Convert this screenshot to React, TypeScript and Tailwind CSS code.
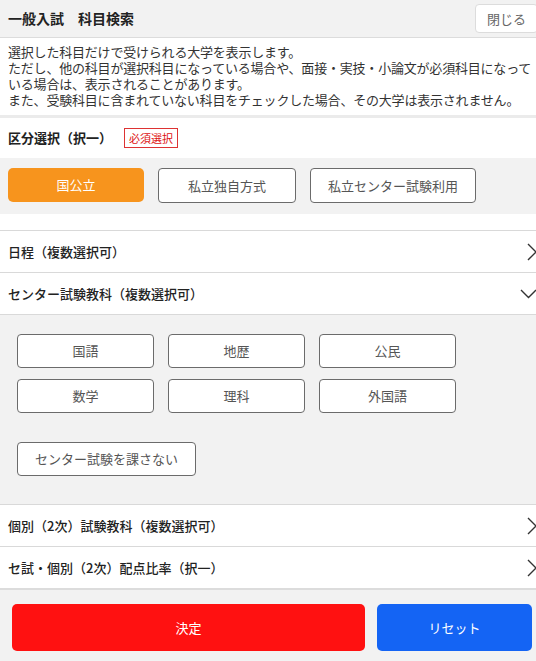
import React from "react";

const font = { fontFamily: '"Noto Sans CJK JP", "Noto Sans", sans-serif' };

function ChevronRight() {
  return (
    <svg width="10" height="18" viewBox="0 0 10 18" className="mr-[-1px] shrink-0">
      <polyline points="1,1 9,9 1,17" fill="none" stroke="#333" strokeWidth="1.4" />
    </svg>
  );
}

function ChevronDown() {
  return (
    <svg width="17" height="10" viewBox="0 0 17 10" className="mr-[-1px] shrink-0">
      <polyline points="1,1 8.5,8.5 16,1" fill="none" stroke="#333" strokeWidth="1.4" />
    </svg>
  );
}

function Row({ label, open }: { label: string; open?: boolean }) {
  return (
    <div className="h-[42px] bg-white border-t border-[#d9d9d9] flex items-center justify-between pl-2">
      <span className="text-[13px] font-medium text-[#222]">{label}</span>
      {open ? <ChevronDown /> : <ChevronRight />}
    </div>
  );
}

function SubjBtn({ label, w = "w-[137px]" }: { label: string; w?: string }) {
  return (
    <button className={`${w} h-[34px] bg-white border border-[#6b6b6b] rounded-[4px] text-[13px] text-[#555] flex items-center justify-center`}>
      {label}
    </button>
  );
}

export default function App() {
  return (
    <div className="w-[536px] h-[661px] overflow-hidden bg-white flex flex-col" style={font}>
      <div className="h-[38px] bg-[#f2f2f2] border-b border-[#dcdcdc] flex items-center justify-between pl-2 shrink-0">
        <span className="text-[14px] font-bold text-[#222]">一般入試　科目検索</span>
        <button className="w-[63px] h-[29px] mr-[-2px] bg-white border border-[#dcdcdc] rounded-[4px] text-[13px] text-[#666] flex items-center justify-center">
          閉じる
        </button>
      </div>
      <div className="bg-white px-2 pt-[6px] pb-[7px] text-[13px] leading-[16px] tracking-[-0.2px] text-[#333] border-b-[3px] border-[#ebebeb] shrink-0 whitespace-nowrap">
        <p>選択した科目だけで受けられる大学を表示します。</p>
        <p>ただし、他の科目が選択科目になっている場合や、面接・実技・小論文が必須科目になって</p>
        <p>いる場合は、表示されることがあります。</p>
        <p>また、受験科目に含まれていない科目をチェックした場合、その大学は表示されません。</p>
      </div>
      <div className="h-[40px] bg-white flex items-center pl-2 shrink-0">
        <span className="text-[13px] font-bold text-[#222]">区分選択（択一）</span>
        <span className="ml-[12px] h-[20px] px-[4px] border border-[#d33] text-[11px] text-[#d11] flex items-center">必須選択</span>
      </div>
      <div className="bg-[#f2f2f2] px-2 pt-[10px] pb-[11px] flex gap-[14px] shrink-0">
        <button className="w-[136px] h-[34px] bg-[#f7941d] rounded-[5px] text-[13px] text-white flex items-center justify-center">国公立</button>
        <button className="w-[138px] h-[35px] bg-white border border-[#6b6b6b] rounded-[4px] text-[13px] text-[#555] flex items-center justify-center">私立独自方式</button>
        <button className="w-[166px] h-[35px] bg-white border border-[#6b6b6b] rounded-[4px] text-[13px] text-[#555] flex items-center justify-center">私立センター試験利用</button>
      </div>
      <div className="h-[16px] bg-white shrink-0" />
      <Row label="日程（複数選択可）" />
      <Row label="センター試験教科（複数選択可）" open />
      <div className="bg-[#f2f2f2] border-t border-[#d9d9d9] pl-[17px] pt-[19px] pb-[28px] flex flex-col shrink-0">
        <div className="grid grid-cols-[137px_137px_137px] gap-x-[14px] gap-y-[11px]">
          <SubjBtn label="国語" />
          <SubjBtn label="地歴" />
          <SubjBtn label="公民" />
          <SubjBtn label="数学" />
          <SubjBtn label="理科" />
          <SubjBtn label="外国語" />
        </div>
        <div className="mt-[29px]">
          <SubjBtn label="センター試験を課さない" w="w-[179px]" />
        </div>
      </div>
      <Row label="個別（2次）試験教科（複数選択可）" />
      <Row label="セ試・個別（2次）配点比率（択一）" />
      <div className="flex-1 bg-[#f2f2f2] border-t-2 border-[#dcdcdc] pl-[12px] pr-[4px] pt-[14px] flex gap-[12px]">
        <button className="w-[353px] h-[47px] bg-[#ff1111] rounded-[5px] text-[13px] text-white flex items-center justify-center">決定</button>
        <button className="w-[155px] h-[47px] bg-[#1464f4] rounded-[5px] text-[13px] text-white flex items-center justify-center">リセット</button>
      </div>
    </div>
  );
}
